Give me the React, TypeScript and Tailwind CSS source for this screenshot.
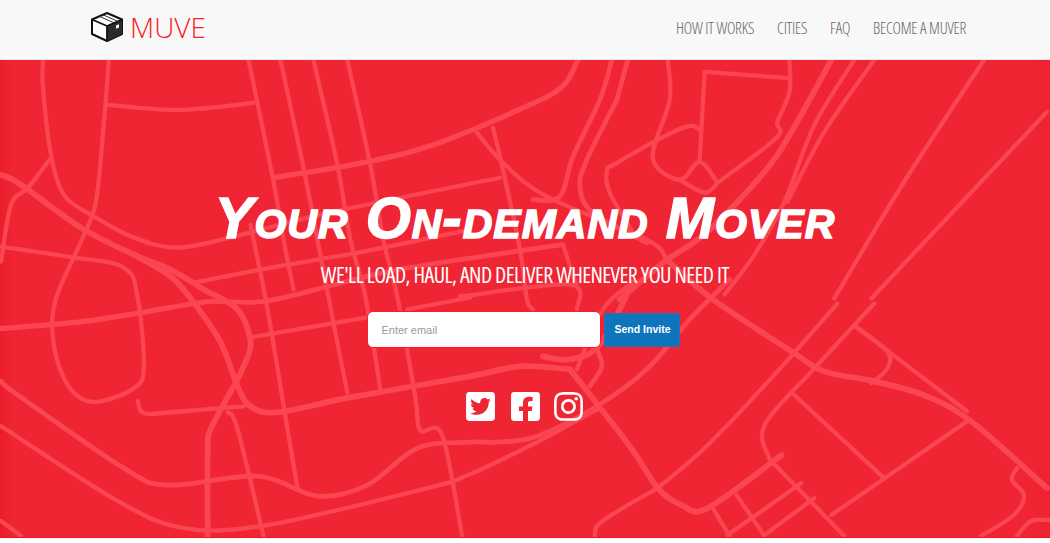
import { FaFacebookSquare, FaInstagram, FaTwitterSquare } from "react-icons/fa";

type Road = [number, number[]];

// x,y pairs in page coordinates
const roads: Road[] = [
  [3.5, [42,60, 42,88, 50,155, 63,195, 90,215, 133,238, 177,248, 233,237, 333,212, 500,178]],
  [3.5, [108,60, 103,122, 95,202, 80,242, 55,299, 52,339, 63,379, 80,399, 100,402, 133,389, 143,369, 137,299, 123,268, 67,257, 0,247]],
  [3.5, [108,105, 177,110, 253,103]],
  [3.5, [248,60, 273,182, 283,240, 293,290]],
  [3.5, [250,225, 253,240, 267,310, 287,430, 297,489]],
  [3.5, [280,60, 303,168, 317,240, 333,323, 347,393]],
  [3.5, [313,60, 337,165, 350,240, 365,297, 380,390]],
  [3.5, [347,60, 370,165, 383,240, 397,297, 415,397, 420,431, 442,436, 462,537]],
  [4.5, [273,178, 367,162, 433,145, 523,108, 562,87, 578,60]],
  [3.5, [193,283, 260,270, 317,260, 363,252, 470,230]],
  [4, [170,308, 210,302, 263,302, 327,287, 383,273, 460,260, 563,245]],
  [3.5, [477,133, 503,163, 547,197, 647,240, 667,260]],
  [3.5, [493,128, 503,170, 520,250, 527,300, 533,310]],
  [3.5, [460,297, 570,285, 577,310]],
  [3.5, [563,245, 577,287]],
  // left thick roads
  [5, [0,175, 20,185, 80,228, 133,255, 170,270, 203,290, 237,310, 250,343, 243,367, 233,387, 210,430, 207,450, 207,537]],
  [5, [133,255, 170,277, 193,303, 220,343, 237,387, 250,407, 277,413, 350,398, 470,377, 520,367, 570,370]],
  [3.5, [50,158, 27,188, 10,205, 0,262]],
  [4.5, [0,329, 83,322, 170,308]],
  [3.5, [227,413, 237,430, 263,537]],
  [3.5, [250,338, 367,318]],
  [3.5, [407,310, 470,298]],
  [3.5, [137,402, 143,414, 170,413, 243,407]],
  [4, [0,382, 17,396, 123,469, 167,486, 257,477, 317,497, 367,486, 417,449, 470,443, 497,443, 537,437, 597,407, 647,370, 690,320, 730,280]],
  [3.5, [0,427, 117,502, 183,529, 267,526, 427,489, 470,475, 537,443, 597,410]],
  [3.5, [0,522, 20,537]],
  // right half
  [4, [617,100, 587,160, 580,187, 593,213, 647,243]],
  [4, [628,60, 617,100]],
  [4, [612,60, 600,100, 573,157, 560,197, 533,200]],
  [3.5, [668,60, 670,100, 653,158, 680,180, 700,162, 718,183]],
  [3.5, [705,72, 787,78]],
  [3.5, [705,72, 700,160]],
  [3.5, [680,180, 705,193, 718,183]],
  [3.5, [790,60, 790,92, 778,122, 777,138, 718,183]],
  [3.5, [700,130, 683,128, 617,163, 607,172, 610,193, 633,233]],
  [5, [832,60, 792,132, 765,172, 708,232, 665,262, 620,300]],
  [3.5, [855,60, 815,125, 785,202, 755,255, 725,295]],
  [3.5, [875,60, 825,132, 788,202]],
  [3.5, [985,60, 905,182, 835,299]],
  [3.5, [1048,112, 872,299]],
  [5, [667,260, 712,299, 792,352, 825,372, 875,382, 925,396, 972,422, 1048,489]],
  [5, [570,370, 630,447, 658,489, 682,506, 708,509, 782,456]],
  [3.5, [658,489, 618,512, 598,526, 595,537]],
  [3.5, [658,489, 708,446, 778,372, 838,304]],
  [3.5, [770,460, 765,426, 815,369, 875,304]],
  [3.5, [770,460, 845,537]],
  [3.5, [793,394, 885,479]],
  [3.5, [832,516, 968,422]],
  [3.5, [855,326, 888,352, 888,369, 872,384]],
  [3.5, [855,326, 968,412]],
  [3.5, [712,507, 730,537]],
  [3.5, [737,496, 765,537]],
  [3.5, [728,536, 802,484]],
  [3.5, [765,536, 815,499]],
  [3.5, [1018,469, 1013,481, 1025,496, 1015,516, 982,537]],
  [3.5, [1018,537, 1032,522, 1050,521]],
  [4, [597,350, 602,367, 590,387]],
  [5, [543,357, 570,360, 600,345, 633,283]],
  [3.5, [577,370, 603,310, 633,283]],
];

// soft catmull-rom through the points, roads have rounded bends
function toPath(p: number[]) {
  let d = `M${p[0]} ${p[1]}`;
  const n = p.length / 2;
  const at = (i: number) => {
    const k = Math.max(0, Math.min(n - 1, i));
    return [p[k * 2], p[k * 2 + 1]];
  };
  for (let i = 0; i < n - 1; i++) {
    const [x0, y0] = at(i - 1);
    const [x1, y1] = at(i);
    const [x2, y2] = at(i + 1);
    const [x3, y3] = at(i + 2);
    const c1x = x1 + (x2 - x0) / 6;
    const c1y = y1 + (y2 - y0) / 6;
    const c2x = x2 - (x3 - x1) / 6;
    const c2y = y2 - (y3 - y1) / 6;
    d += ` C${c1x} ${c1y} ${c2x} ${c2y} ${x2} ${y2}`;
  }
  return d;
}

function BoxLogo() {
  return (
    <svg viewBox="0 0 32 30" className="w-8 h-[30px]">
      <path d="M16 1 31 7.5V22L16 29 1 22V7.5Z" fill="#fff" stroke="#111" strokeWidth="2" strokeLinejoin="round" />
      <path d="M16 14 31 7.5V22L16 29Z" fill="#2b2b2b" />
      <path d="M1 7.5 16 14 31 7.5M16 14V29" fill="none" stroke="#111" strokeWidth="1.8" strokeLinejoin="round" />
      <path d="M8 4.2 23 10.8M12 2.8 26.5 9.2" fill="none" stroke="#333" strokeWidth="1" />
      <path d="M25 13.5 28 12.2V15.5L25 16.8Z" fill="#fff" />
    </svg>
  );
}

export default function App() {
  return (
    <div className="bg-white h-[543px] overflow-hidden font-['Liberation_Sans',sans-serif]">
      {/* Navbar */}
      <div className="h-[60px] bg-[#f8f8f8] border-b border-[#e7e7e7] flex items-center justify-between pl-[91px] pr-[84px]">
        <div className="flex items-center gap-[7px] pb-[6px]">
          <BoxLogo />
          <span className="font-['Open_Sans',sans-serif] font-[350] text-[28px] leading-none text-[#fb1c24]">MUVE</span>
        </div>
        <div className="flex gap-[23px] pb-[4px] font-['Open_Sans',sans-serif] font-light text-[16px] text-[#666] [font-stretch:75%] tracking-[-0.24px]">
          <a>HOW IT WORKS</a>
          <a>CITIES</a>
          <a>FAQ</a>
          <a>BECOME A MUVER</a>
        </div>
      </div>

      {/* Hero */}
      <div className="relative h-[478px] bg-[linear-gradient(90deg,#ea1e2b_0,#ef2533_12px,#ef2533_1030px,#ee2230_100%)] border-b border-[#f5101c] flex flex-col items-center">
        <svg viewBox="0 60 1050 478" className="absolute inset-0 w-full h-full blur-[0.6px]">
          {roads.map(([w, pts], i) => (
            <path key={i} d={toPath(pts)} fill="none" stroke="#fb4552" strokeWidth={w + 0.8} strokeLinecap="round" strokeLinejoin="round" />
          ))}
        </svg>

        <div className="relative flex flex-col items-center">
          <h1 className="mt-[126px] font-bold italic text-[58px] leading-[64px] text-white [font-variant:small-caps] [-webkit-text-stroke:1.5px_white] tracking-[1px] whitespace-nowrap">
            Your On-demand Mover
          </h1>
          <div className="mt-[10px] font-['Open_Sans',sans-serif] text-[22px] leading-7 text-white [font-stretch:75%] tracking-[-0.55px] whitespace-nowrap">
            WE'LL LOAD, HAUL, AND DELIVER WHENEVER YOU NEED IT
          </div>

          <div className="mt-[23px] flex items-center gap-[3px]">
            <input
              placeholder="Enter email"
              className="w-[234px] h-[37px] pl-[13px] pr-3 bg-white border border-[#fb1c24] rounded-[6px] text-[11px] placeholder:text-[#999] outline-none"
            />
            <button className="w-[76px] h-[34px] mt-px mr-[2px] bg-[#0e75bc] border border-[#2a6fb0] rounded-[2px] text-white text-[10.5px] font-bold">
              Send Invite
            </button>
          </div>

          <div className="mt-[42px] flex items-center gap-[12px] text-white">
            <FaTwitterSquare size={33} />
            <FaFacebookSquare size={33} />
            <FaInstagram size={33} className="-ml-[2px]" />
          </div>
        </div>
      </div>
    </div>
  );
}
